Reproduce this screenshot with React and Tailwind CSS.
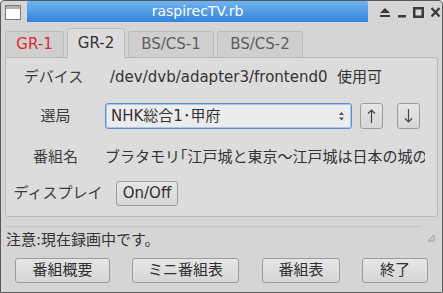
import React from "react";

const F = { fontFamily: '"DejaVu Sans", "Noto Sans CJK JP", sans-serif' };

function Btn({ children, className = "" }) {
  return (
    <div
      className={
        "flex items-center justify-center border border-[#9c9c9c] rounded-[3px] bg-gradient-to-b from-[#e6e6e6] to-[#d6d6d6] text-[#2f2f2f] text-[15px] " +
        className
      }
    >
      {children}
    </div>
  );
}

export default function App() {
  return (
    <div
      className="w-[443px] h-[293px] bg-[#d5d5d5] border border-[#585858] rounded-t-[4px] flex flex-col overflow-hidden"
      style={F}
    >
      {/* title bar */}
      <div className="h-[21px] flex shrink-0">
        <div className="w-[26px] flex items-start pl-[4px] pt-[4px]">
          <div className="w-[16px] h-[15px] border border-[#7a7a7a] bg-white flex flex-col">
            <div className="h-[3px] bg-[#b0b0b0]" />
          </div>
        </div>
        <div className="flex-1 bg-gradient-to-b from-[#6fb3f2] to-[#3383da] flex items-center justify-center text-white text-[14px] rounded-tl-[2px] rounded-tr-[2px]">
          raspirecTV.rb
        </div>
        <div className="w-[74px] flex items-center gap-[6px] pl-[11px] pt-[1px]">
          <svg width="12" height="12" viewBox="0 0 12 12">
            <path d="M6 2 L11 7 H1 Z" fill="#3a3a3a" />
            <rect x="1" y="9" width="10" height="2" fill="#3a3a3a" />
          </svg>
          <svg width="10" height="12" viewBox="0 0 10 12">
            <rect x="1" y="9" width="8" height="2.5" fill="#3a3a3a" />
          </svg>
          <svg width="11" height="12" viewBox="0 0 11 12">
            <rect x="1.25" y="2.25" width="8.5" height="8.5" fill="none" stroke="#3a3a3a" strokeWidth="2.5" />
          </svg>
          <svg width="11" height="12" viewBox="0 0 11 12">
            <path d="M1.5 2 L9.5 10.5 M9.5 2 L1.5 10.5" stroke="#3a3a3a" strokeWidth="2.2" />
          </svg>
        </div>
      </div>

      {/* tabs */}
      <div className="flex items-end h-[35px] pl-[4px] gap-[3px] shrink-0">
        <div className="w-[59px] h-[26px] border border-b-0 border-[#bdbdbd] rounded-t-[3px] bg-[#cfcfcf] flex items-center justify-center text-[15px] text-[#e02a2a]">
          GR-1
        </div>
        <div className="w-[58px] h-[30px] -mb-px border border-b-0 border-[#bdbdbd] rounded-t-[3px] bg-[#dcdcdc] flex items-center justify-center text-[15px] text-[#333] relative z-10">
          GR-2
        </div>
        <div className="w-[86px] h-[26px] border border-b-0 border-[#bdbdbd] rounded-t-[3px] bg-[#cfcfcf] flex items-center justify-center text-[15px] text-[#5e5e5e]">
          BS/CS-1
        </div>
        <div className="w-[86px] h-[26px] border border-b-0 border-[#bdbdbd] rounded-t-[3px] bg-[#cfcfcf] flex items-center justify-center text-[15px] text-[#5e5e5e]">
          BS/CS-2
        </div>
      </div>

      {/* panel */}
      <div className="mx-[4px] h-[160px] border border-[#b9b9b9] rounded-b-[3px] rounded-tr-[3px] bg-[#dcdcdc] flex flex-col shrink-0 text-[15px] text-[#333]">
        <div className="h-[36px] flex items-center mt-[1px]">
          <div className="w-[95px] text-center text-[#3c3c3c]">デバイス</div>
          <div className="whitespace-nowrap ml-[9px]">/dev/dvb/adapter3/frontend0&nbsp;&nbsp;使用可</div>
        </div>
        <div className="h-[42px] flex items-center">
          <div className="w-[99px] text-center text-[#3c3c3c]">選局</div>
          <div className="w-[247px] h-[26px] border border-[#5d8fcd] rounded-[3px] bg-[#ececec] shadow-[inset_0_0_0_1px_#a9c6ea] flex items-center pl-[5px] pr-[6px]">
            <span className="flex-1 whitespace-nowrap">NHK総合1･甲府</span>
            <svg width="7" height="12" viewBox="0 0 7 12">
              <path d="M1 5 L3.5 2 L6 5 Z" fill="#555" />
              <path d="M1 7.5 L3.5 10.5 L6 7.5 Z" fill="#555" />
            </svg>
          </div>
          <Btn className="w-[23px] h-[26px] ml-[8px]">
            <svg width="9" height="16" viewBox="0 0 9 16">
              <path d="M4.5 2 V15 M1 5.5 L4.5 2 L8 5.5" stroke="#444" strokeWidth="1.2" fill="none" />
            </svg>
          </Btn>
          <Btn className="w-[23px] h-[26px] ml-[14px]">
            <svg width="9" height="16" viewBox="0 0 9 16">
              <path d="M4.5 1 V14 M1 10.5 L4.5 14 L8 10.5" stroke="#444" strokeWidth="1.2" fill="none" />
            </svg>
          </Btn>
        </div>
        <div className="h-[40px] flex items-center overflow-hidden">
          <div className="w-[99px] shrink-0 text-center text-[#3c3c3c]">番組名</div>
          <div className="whitespace-nowrap overflow-hidden w-[320px]">
            ブラタモリ｢江戸城と東京～江戸城は日本の城の代表｣
          </div>
        </div>
        <div className="h-[32px] flex items-center">
          <div className="w-[104px] text-center text-[#3c3c3c]">ディスプレイ</div>
          <Btn className="w-[62px] h-[25px] ml-[6px]">On/Off</Btn>
        </div>
      </div>

      {/* status */}
      <div className="mt-[9px] mx-[4px] mr-[21px] h-px bg-[#c3c3c3] shrink-0" />
      <div className="h-[27px] flex items-center pl-[5px] pr-[7px] text-[15px] text-[#333] shrink-0">
        <span className="flex-1">注意:現在録画中です。</span>
        <svg width="8" height="8" viewBox="0 0 8 8" className="mb-[6px]">
          <path d="M7 1 L7 7 L1 7 Z" fill="none" stroke="#a0a0a0" strokeWidth="1" />
        </svg>
      </div>

      {/* buttons */}
      <div className="flex items-center mt-[4px] shrink-0 pl-[14px]">
        <Btn className="w-[95px] h-[25px]">番組概要</Btn>
        <Btn className="w-[107px] h-[25px] ml-[22px]">ミニ番組表</Btn>
        <Btn className="w-[78px] h-[25px] ml-[23px]">番組表</Btn>
        <Btn className="w-[66px] h-[25px] ml-[22px]">終了</Btn>
      </div>
    </div>
  );
}
